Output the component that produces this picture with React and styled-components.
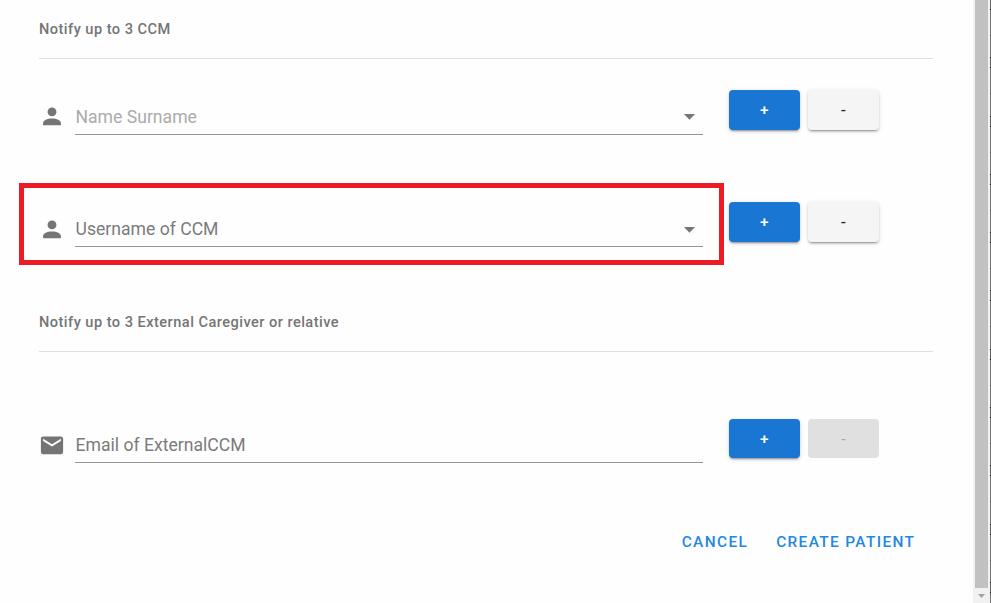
import React from "react";
import styled, { createGlobalStyle } from "styled-components";

const GlobalStyle = createGlobalStyle`
  * { box-sizing: border-box; }
  html, body { margin: 0; padding: 0; overflow: hidden; background: #fff; }
  body { font-family: Roboto, "Liberation Sans", sans-serif; }
`;

const Window = styled.div`
  display: flex;
  width: 991px;
  height: 603px;
  background: #fefefe;
`;

const Dialog = styled.main`
  flex: 1;
  min-width: 0;
  padding-left: 39px;
  background: #fefefe;
`;

const SectionTitle = styled.h2`
  width: 894px;
  height: ${(p) => p.$height}px;
  margin: 0;
  padding-top: ${(p) => p.$top}px;
  border-bottom: 1px solid #e0e0e0;
  color: #757575;
  font-size: 14.6px;
  font-weight: 500;
  line-height: 24px;
  letter-spacing: 0.46px;
`;

const FormRow = styled.div`
  display: flex;
  align-items: flex-start;
  width: 894px;
  height: ${(p) => p.$height}px;
  margin-top: ${(p) => p.$gap}px;
`;

const Field = styled.div`
  display: flex;
  width: 664px;
  height: 100%;
`;

const FieldIcon = styled.span`
  width: 36px;
  height: 27px;
  margin-top: ${(p) => p.$offset}px;
  svg { display: block; }
`;

const FieldControl = styled.div`
  display: flex;
  justify-content: space-between;
  align-items: flex-start;
  flex: 1;
  padding-top: 13px;
  border-bottom: 1px solid #949494;
`;

const Caret = styled.span`
  height: 27px;
  margin-top: ${(p) => p.$offset}px;
  svg { display: block; }
`;

const FieldText = styled.span`
  padding-left: 0.5px;
  color: ${(p) => (p.$placeholder ? "#ababab" : "#7b7b7b")};
  font-size: 17.6px;
  font-weight: 400;
  line-height: ${(p) => p.$lineHeight}px;
`;

const Actions = styled.div`
  display: flex;
  gap: 8px;
  margin-left: 26px;
`;

const elevation = `0 3px 1px -2px rgba(0,0,0,.2), 0 2px 2px 0 rgba(0,0,0,.14), 0 1px 5px 0 rgba(0,0,0,.12)`;

const palette = {
  primary: { background: "#1976d2", color: "#fff", shadow: elevation },
  plain: { background: "#f5f5f5", color: "rgba(0,0,0,.87)", shadow: elevation },
  disabled: { background: "#e0e0e0", color: "rgba(0,0,0,.26)", shadow: "none" },
};

const StepButton = styled.button`
  width: 71px;
  height: ${(p) => p.$height}px;
  padding: 0 0 0 1px;
  border: 0;
  border-radius: 4px;
  background: ${(p) => palette[p.$tone].background};
  color: ${(p) => palette[p.$tone].color};
  box-shadow: ${(p) => palette[p.$tone].shadow};
  font: 500 15.5px/20px Roboto, sans-serif;
  letter-spacing: 1.39px;
`;

const Footer = styled.footer`
  display: flex;
  gap: 28px;
  margin: 67px 0 0 642.7px;
`;

const TextButton = styled.button`
  padding: 0;
  border: 0;
  background: none;
  color: #1e88e5;
  font: 500 15.4px/24px Roboto, sans-serif;
  letter-spacing: 1.37px;
  white-space: nowrap;
`;

const Scrollbar = styled.div`
  display: flex;
  flex-direction: column;
  align-items: center;
  width: 17px;
  background: #f1f1f1;
`;

const Thumb = styled.div`
  width: 13px;
  height: 588px;
  background: #c1c1c1;
`;

const ScrollArrow = styled.svg`
  display: block;
  width: 7px;
  height: 4px;
  margin-top: 6px;
`;

const Backdrop = styled.div`
  width: 1px;
  background: repeating-linear-gradient(
    #646464 0 9px, #0a0a0a 9px 10px, #777 10px 35px,
    #5c5c5c 35px 36px, #777 36px 57.3px, #181818 57.3px 58.3px
  );
`;

const ICONS = {
  person: {
    viewBox: "0.3 0 24.3 24.3",
    path: "M12,4A4,4 0 0,1 16,8A4,4 0 0,1 12,12A4,4 0 0,1 8,8A4,4 0 0,1 12,4M12,14C16.42,14 20,15.79 20,18V20H4V18C4,15.79 7.58,14 12,14Z",
  },
  email: {
    viewBox: "0.3 0 24.3 24.3",
    path: "M20,8L12,13L4,8V6L12,11L20,6M20,4H4C2.89,4 2,4.89 2,6V18A2,2 0 0,0 4,20H20A2,2 0 0,0 22,18V6C22,4.89 21.1,4 20,4Z",
  },
  caret: { viewBox: "-0.15 0 24.3 24.3", path: "M7,10L12,15L17,10H7Z" },
};

function Icon({ name }) {
  return (
    <svg width="27" height="27" viewBox={ICONS[name].viewBox} fill="#757575" aria-hidden="true">
      <path d={ICONS[name].path} />
    </svg>
  );
}

function ContactRow({
  icon, label, placeholder, select, gap, disabled,
  iconTop = 13, caretTop = 0, rowHeight = 45, textHeight = 28, buttonHeight = 40,
}) {
  return (
    <FormRow $gap={gap} $height={rowHeight}>
      <Field>
        <FieldIcon $offset={iconTop}>
          <Icon name={icon} />
        </FieldIcon>
        <FieldControl>
          <FieldText $placeholder={placeholder} $lineHeight={textHeight}>{label}</FieldText>
          {select && <Caret $offset={caretTop}><Icon name="caret" /></Caret>}
        </FieldControl>
      </Field>
      <Actions>
        <StepButton $tone="primary" $height={buttonHeight}>+</StepButton>
        <StepButton $tone={disabled ? "disabled" : "plain"} $height={buttonHeight} disabled={disabled}>-</StepButton>
      </Actions>
    </FormRow>
  );
}

const Highlight = styled.div`
  width: 705px;
  height: 82px;
  margin: -64px 0 0 -20px;
  border: 5px solid #ed1c24;
  pointer-events: none;
`;

export default function App() {
  return (
    <>
      <GlobalStyle />
      <Window>
        <Dialog>
          <SectionTitle $height={59} $top={17}>Notify up to 3 CCM</SectionTitle>
          <ContactRow icon="person" label="Name Surname" placeholder select gap={31} />
          <ContactRow icon="person" label="Username of CCM" select gap={67} iconTop={14} caretTop={1} />
          <Highlight />
          <SectionTitle $height={87} $top={45}>Notify up to 3 External Caregiver or relative</SectionTitle>
          <ContactRow icon="email" label="Email of ExternalCCM" gap={67} rowHeight={44} textHeight={26} buttonHeight={39} disabled />
          <Footer>
            <TextButton>CANCEL</TextButton>
            <TextButton>CREATE PATIENT</TextButton>
          </Footer>
        </Dialog>
        <Scrollbar>
          <Thumb />
          <ScrollArrow viewBox="0 0 7 4" fill="#a3a3a3">
            <path d="M0 0H7L3.5 4Z" />
          </ScrollArrow>
        </Scrollbar>
        <Backdrop />
      </Window>
    </>
  );
}
